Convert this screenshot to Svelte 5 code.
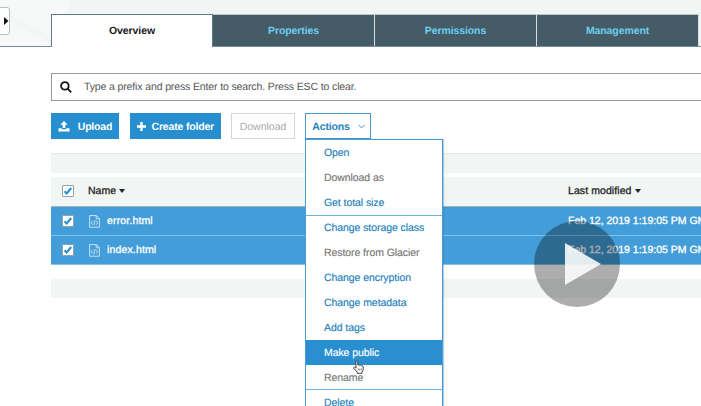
<script>
  const tabs = ['Overview', 'Properties', 'Permissions', 'Management'];
  const files = [
    { name: 'error.html', modified: 'Feb 12, 2019 1:19:05 PM GM' },
    { name: 'index.html', modified: 'Feb 12, 2019 1:19:05 PM GM' }
  ];
  const groups = [
    [{ label: 'Open' }, { label: 'Download as', disabled: true }, { label: 'Get total size' }],
    [
      { label: 'Change storage class' },
      { label: 'Restore from Glacier', disabled: true },
      { label: 'Change encryption' },
      { label: 'Change metadata' },
      { label: 'Add tags' },
      { label: 'Make public', active: true },
      { label: 'Rename', disabled: true }
    ],
    [{ label: 'Delete' }]
  ];
</script>

{#snippet check()}
  <span class="check">
    <svg width="12" height="12" viewBox="0 0 12 12"><path d="M2.5 6.2 4.7 8.5 9.2 3" /></svg>
  </span>
{/snippet}

<div class="page">
  <header>
    <svg class="backdrop" width="160" height="46" viewBox="0 0 160 46">
      <path d="M0 0H71Q69 10 62 15H51V46H0Z" fill="#f7f9f8" />
      <path d="M10 15 51 37V44L10 22Z" fill="#f3f6f5" />
    </svg>
    <button class="drawer" aria-label="Expand">
      <svg width="5" height="8" viewBox="0 0 5 8"><path d="M0 0 4.5 4 0 8Z" fill="#111" /></svg>
    </button>
    <nav>
      {#each tabs as tab, i}
        <div class="tab" class:selected={i === 0}>{tab}</div>
      {/each}
    </nav>
  </header>

  <main>
    <div class="search">
      <svg width="12" height="12" viewBox="0 0 12 12">
        <circle cx="4.9" cy="4.9" r="3.8" /><path d="m7.6 7.6 3.6 3.7" />
      </svg>
      <span>Type a prefix and press Enter to search. Press ESC to clear.</span>
    </div>

    <div class="toolbar">
      <button class="btn primary upload">
        <svg width="12" height="11" viewBox="0 0 12 11" fill="#fff">
          <path d="M6 0 9.6 3.8H7.3V7H4.7V3.8H2.4ZM.5 7.2H3.8V8.3H8.2V7.2H11.5V10.4H.5Z" />
        </svg>
        <span>Upload</span>
      </button>
      <button class="btn primary create">
        <svg width="9" height="9" viewBox="0 0 9 9" fill="#fff"><path d="M3.3 0H5.7V3.3H9V5.7H5.7V9H3.3V5.7H0V3.3H3.3Z" /></svg>
        <span>Create folder</span>
      </button>
      <button class="btn muted">Download</button>
      <div class="actions">
        <button class="btn trigger">
          <span>Actions</span>
          <svg width="7" height="5" viewBox="0 0 7 5"><path d="M.5.7 3.5 3.9 6.5.7" /></svg>
        </button>
        <div class="menu">
          {#each groups as group}
            <div class="group">
              {#each group as item}
                <div class="item" class:disabled={item.disabled} class:active={item.active}>{item.label}</div>
              {/each}
            </div>
          {/each}
        </div>
      </div>
    </div>

    <div class="strip top"></div>
    <div class="row head">
      {@render check()}
      <div class="name">Name <i></i></div>
      <div class="date">Last modified <i></i></div>
    </div>
    {#each files as file}
      <div class="row file">
        {@render check()}
        <svg class="doc" width="11" height="13" viewBox="0 0 11 13">
          <path d="M.6.6H7.4L10.4 3.6V12.2H.6ZM7.2.8V3.8H10.2M3.8 5.7 2.3 7.7 3.8 9.7M7.2 5.7 8.7 7.7 7.2 9.7M6.1 5.1 4.9 10.3" />
        </svg>
        <div class="filename">{file.name}</div>
        <div class="date">{file.modified}</div>
      </div>
    {/each}
    <div class="strip bottom"></div>
  </main>

  <svg class="cursor" width="11" height="14" viewBox="0 0 11 14">
    <path d="M3 8.2V1.6Q3 .6 3.9.6T4.8 1.6V5Q5.9 4.3 6.5 5.3 7.6 4.7 8.2 5.8 10 5.2 10.2 7V9.4Q10 11 9 12V13.3H4.2V12L1 8.6Q.2 7.4 1.3 7.2 2.2 7.2 3 8.2Z" />
    <path d="M5.2 8.5V10.6M6.8 8.5V10.6M8.4 8.5V10.6" stroke-width=".6" />
  </svg>

  <div class="play">
    <svg width="36" height="42" viewBox="0 0 36 42"><path d="M0 0 36 21 0 42Z" fill="#fff" fill-opacity=".87" /></svg>
  </div>
</div>

<style>
  .page {
    position: relative;
    width: 701px;
    height: 406px;
    overflow: hidden;
    background: #fff;
    font: 10.5px/14px 'Liberation Sans', Arial, sans-serif;
    text-rendering: geometricPrecision;
    color: #222;
    white-space: nowrap;
  }
  button { font: inherit; margin: 0; padding: 0; text-rendering: inherit; }
  svg { display: block; flex: none; }
  header {
    position: relative;
    height: 47px;
    box-sizing: border-box;
    background: #f1f5f4;
    border-bottom: 1px solid #768e99;
  }
  .backdrop { position: absolute; left: 0; top: 0; }
  .drawer {
    position: absolute;
    left: -4px;
    top: 7px;
    width: 14px;
    height: 28px;
    box-sizing: border-box;
    padding-left: 7px;
    background: #fff;
    border: 1px solid #b9bdbf;
    border-radius: 3px;
  }
  nav { position: relative; display: flex; padding: 14px 0 0 51px; }
  .tab {
    width: 162px;
    height: 32px;
    box-sizing: border-box;
    display: flex;
    align-items: center;
    justify-content: center;
    background: #455b65;
    color: #6ccff0;
    font-weight: bold;
    font-size: 10.5px;
    letter-spacing: -.1px;
    border-top: 1px solid #b9c6cb;
    border-right: 1px solid #d5dfe2;
  }
  .tab.selected {
    height: 33px;
    background: #fff;
    color: #161616;
    border: 1px solid #607b88;
    border-bottom: 0;
  }
  main { padding: 26px 0 0 51px; }
  .search {
    height: 28px;
    box-sizing: border-box;
    border: 1px solid #999;
    border-right: 0;
    display: flex;
    align-items: center;
    padding-left: 8px;
    color: #555;
    letter-spacing: -.13px;
  }
  .search svg { fill: none; stroke: #151515; stroke-width: 1.8; margin-right: 12px; }
  .toolbar { display: flex; padding-top: 12px; height: 27px; }
  .btn {
    height: 26px;
    box-sizing: border-box;
    display: flex;
    align-items: center;
    justify-content: center;
    font-weight: bold;
    font-size: 10.5px;
    letter-spacing: -.18px;
    border: 1px solid transparent;
  }
  .btn span, .muted { padding-top: 1px; }
  .primary { background: #278ecf; color: #fff; border: 0; }
  .upload { width: 68px; margin-right: 10.6px; gap: 8px; }
  .create { width: 91.4px; margin-right: 10px; gap: 6px; }
  .muted { width: 64px; margin-right: 10px; background: #fff; border-color: #d5d5d5; color: #aaa; font-weight: normal; letter-spacing: 0; }
  .actions { position: relative; }
  .trigger { width: 66px; background: #fff; border-color: #4a98c9; color: #247fbb; gap: 8px; padding-left: 1px; }
  .trigger svg { fill: none; stroke: #4a98c9; stroke-width: 1; }
  .menu {
    position: absolute;
    z-index: 2;
    left: 0;
    top: 26px;
    width: 138px;
    box-sizing: border-box;
    background: #fff;
    border: 1px solid #4a9bd1;
    box-shadow: 1px 0 1px rgba(70, 130, 170, .4);
  }
  .group + .group { border-top: 1px solid #6db5e0; }
  .item {
    height: 24.85px;
    box-sizing: border-box;
    display: flex;
    align-items: center;
    padding: 1px 0 0 18px;
    color: #247fbb;
    letter-spacing: -.07px;
    -webkit-text-stroke: .15px currentColor;
  }
  .item.disabled { color: #777; }
  .item.active { background: #298fd1; color: #fff; }
  .strip { background: #f1f5f4; }
  .strip.top { height: 20px; margin-top: 13px; border-top: 1px solid #e4e8e8; box-sizing: border-box; }
  .strip.bottom { height: 19px; margin-top: 14px; }
  .row { display: flex; align-items: center; height: 29px; box-sizing: border-box; padding-left: 11px; }
  .head { height: 30px; padding-bottom: 2px; margin-top: 4px; background: #f1f5f4; border-bottom: 1px solid #9fb2bd; -webkit-text-stroke: .3px currentColor; }
  .file { background: #439dd8; color: #fff; border-bottom: 1px solid #83c3eb; -webkit-text-stroke: .3px currentColor; }
  .check {
    flex: none;
    width: 12px;
    height: 12px;
    box-sizing: border-box;
    background: #fff;
    border: 1px solid #8fa3af;
    border-radius: 1px;
    display: flex;
    align-items: center;
    justify-content: center;
  }
  .check svg { fill: none; stroke: #278ecf; stroke-width: 2; }
  .name { flex: none; margin-left: 14px; width: 480px; }
  .head i {
    display: inline-block;
    border: 3.5px solid transparent;
    border-top: 4px solid #222;
    border-bottom: 0;
    vertical-align: 1px;
  }
  .head .date { letter-spacing: .08px; }
  .doc { margin-left: 15px; fill: none; stroke: #d5ebf8; stroke-width: .9; }
  .filename { flex: none; margin-left: 7px; width: 461px; letter-spacing: .15px; }
  .date { flex: none; }
  .cursor { position: absolute; z-index: 3; left: 353px; top: 360px; fill: #fff; stroke: #333; stroke-width: .9; }
  .play {
    position: absolute;
    left: 534px;
    top: 221px;
    width: 86px;
    height: 86px;
    border-radius: 50%;
    background: rgba(0, 0, 0, .32);
    display: flex;
    align-items: center;
    padding-left: 31px;
    box-sizing: border-box;
  }
</style>
